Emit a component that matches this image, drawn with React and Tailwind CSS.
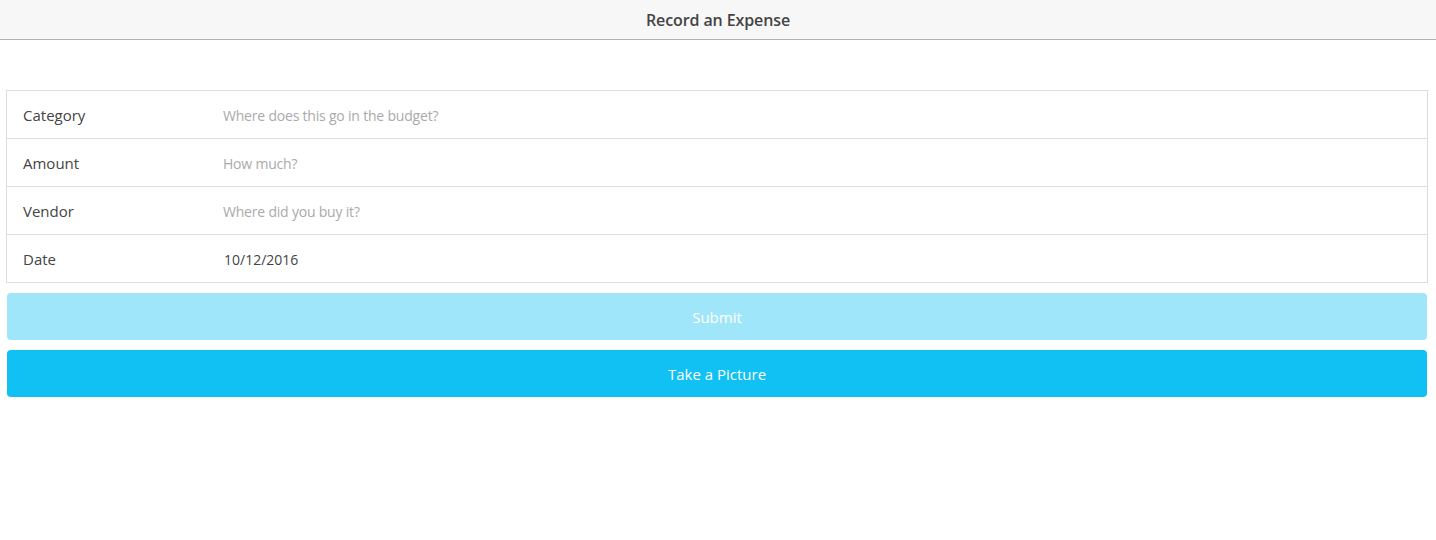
export default function App() {
  const font = { fontFamily: '"Open Sans", "Noto Sans", sans-serif' };
  const rows = [
    { label: "Category", placeholder: "Where does this go in the budget?" },
    { label: "Amount", placeholder: "How much?" },
    { label: "Vendor", placeholder: "Where did you buy it?" },
    { label: "Date", value: "10/12/2016" },
  ];
  return (
    <div className="w-[1436px] h-[540px] bg-white" style={font}>
      <div className="h-[40px] bg-[#f7f7f7] border-b border-[#b2b2b2] flex items-center justify-center">
        <span className="text-[16px] text-[#444] font-semibold tracking-[-0.1px]">Record an Expense</span>
      </div>
      <div className="mt-[50px] ml-[6px] w-[1422px] border border-[#ddd] border-b-0">
        {rows.map((r) => (
          <div key={r.label} className="h-[48px] pt-[2px] border-b border-[#ddd] flex items-center">
            <div className="w-[216px] pl-[16px] text-[15px] text-[#444]">{r.label}</div>
            {r.value ? (
              <div className="pl-[1px] text-[14px] text-[#444]">{r.value}</div>
            ) : (
              <div className="text-[14px] text-[#aaa] tracking-[-0.2px]">{r.placeholder}</div>
            )}
          </div>
        ))}
      </div>
      <div className="ml-[7px] w-[1420px] mt-[10px] flex flex-col gap-[10px]">
        <div className="h-[47px] pt-[2px] rounded-[4px] bg-[#a0e6fa] flex items-center justify-center text-white text-[15px]">
          Submit
        </div>
        <div className="h-[47px] pt-[2px] rounded-[4px] bg-[#11c1f3] flex items-center justify-center text-white text-[15px]">
          Take a Picture
        </div>
      </div>
    </div>
  );
}
